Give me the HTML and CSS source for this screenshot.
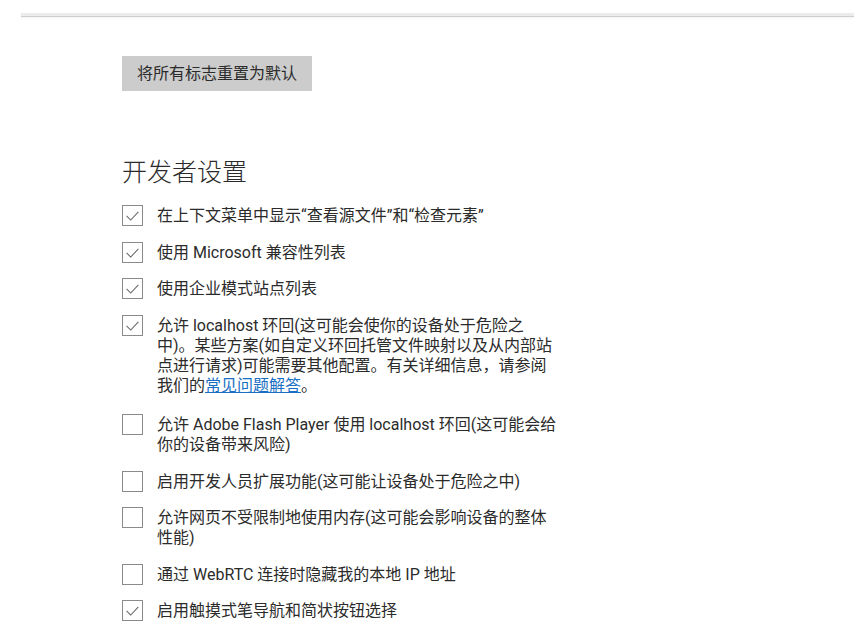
FILE: index.html
```html
<!DOCTYPE html>
<html lang="zh-CN">
<head>
<meta charset="utf-8">
<title>开发者设置</title>
<link rel="stylesheet" href="styles.css">
</head>
<body>
<div class="topbar"></div>
<main class="content">
  <button class="reset-btn" type="button">将所有标志重置为默认</button>
  <h2 class="section-title">开发者设置</h2>
  <ul class="options">
    <li class="option">
      <span class="box"><svg viewBox="0 0 21 21"><polyline points="4,11 8.5,15.5 17,6.5"/></svg></span>
      <span class="label">在上下文菜单中显示“查看源文件”和“检查元素”</span>
    </li>
    <li class="option">
      <span class="box"><svg viewBox="0 0 21 21"><polyline points="4,11 8.5,15.5 17,6.5"/></svg></span>
      <span class="label">使用 Microsoft 兼容性列表</span>
    </li>
    <li class="option">
      <span class="box"><svg viewBox="0 0 21 21"><polyline points="4,11 8.5,15.5 17,6.5"/></svg></span>
      <span class="label">使用企业模式站点列表</span>
    </li>
    <li class="option option-long">
      <span class="box"><svg viewBox="0 0 21 21"><polyline points="4,11 8.5,15.5 17,6.5"/></svg></span>
      <span class="label">允许 localhost 环回(这可能会使你的设备处于危险之中)。某些方案(如自定义环回托管文件映射以及从内部站点进行请求)可能需要其他配置。有关详细信息，请参阅我们的<a href="#" class="link">常见问题解答</a>。</span>
    </li>
    <li class="option">
      <span class="box"></span>
      <span class="label">允许 Adobe Flash Player 使用 localhost 环回(这可能会给你的设备带来风险)</span>
    </li>
    <li class="option">
      <span class="box"></span>
      <span class="label">启用开发人员扩展功能(这可能让设备处于危险之中)</span>
    </li>
    <li class="option">
      <span class="box"></span>
      <span class="label">允许网页不受限制地使用内存(这可能会影响设备的整体性能)</span>
    </li>
    <li class="option">
      <span class="box"></span>
      <span class="label">通过 WebRTC 连接时隐藏我的本地 IP 地址</span>
    </li>
    <li class="option">
      <span class="box"><svg viewBox="0 0 21 21"><polyline points="4,11 8.5,15.5 17,6.5"/></svg></span>
      <span class="label">启用触摸式笔导航和简状按钮选择</span>
    </li>
  </ul>
</main>
</body>
</html>
```

FILE: styles.css
```css
html, body {
  margin: 0;
  padding: 0;
  background: #ffffff;
}

body {
  font-family: Roboto, "Noto Sans CJK SC", sans-serif;
  color: #333333;
  font-size: 16px;
}

.topbar {
  margin: 13px 0 0 21px;
  height: 3px;
  background: #ececec;
  border-bottom: 1px solid #cdcdcd;
  box-shadow: 0 1px 3px rgba(0, 0, 0, 0.05);
}

.content {
  padding: 39px 0 0 122px;
}

.reset-btn {
  display: block;
  width: 190px;
  height: 35px;
  margin: 0;
  padding: 0;
  border: none;
  background: #cccccc;
  color: #2b2b2b;
  font-family: Roboto, "Noto Sans CJK SC", sans-serif;
  font-size: 16px;
  line-height: 35px;
  text-align: center;
}

.section-title {
  margin: 66px 0 0 0;
  font-size: 25px;
  font-weight: 300;
  line-height: 32px;
  color: #2b2b2b;
}

.options {
  list-style: none;
  margin: 17px 0 0 0;
  padding: 0;
  display: flex;
  flex-direction: column;
  gap: 16.5px;
}

.option {
  display: flex;
  align-items: flex-start;
  gap: 14px;
  line-height: 20px;
}

.option-long {
  margin-bottom: 3px;
}

.box {
  flex: none;
  width: 21px;
  height: 21px;
  margin-top: -1px;
  border: 1px solid #8a8a8a;
  box-sizing: border-box;
  background: #ffffff;
  display: flex;
}

.box svg {
  width: 100%;
  height: 100%;
  fill: none;
  stroke: #6a6a6a;
  stroke-width: 1.2;
}

.label {
  width: 402px;
  color: #2b2b2b;
}

.link {
  color: #1a6fc4;
  text-decoration: underline;
}
```
